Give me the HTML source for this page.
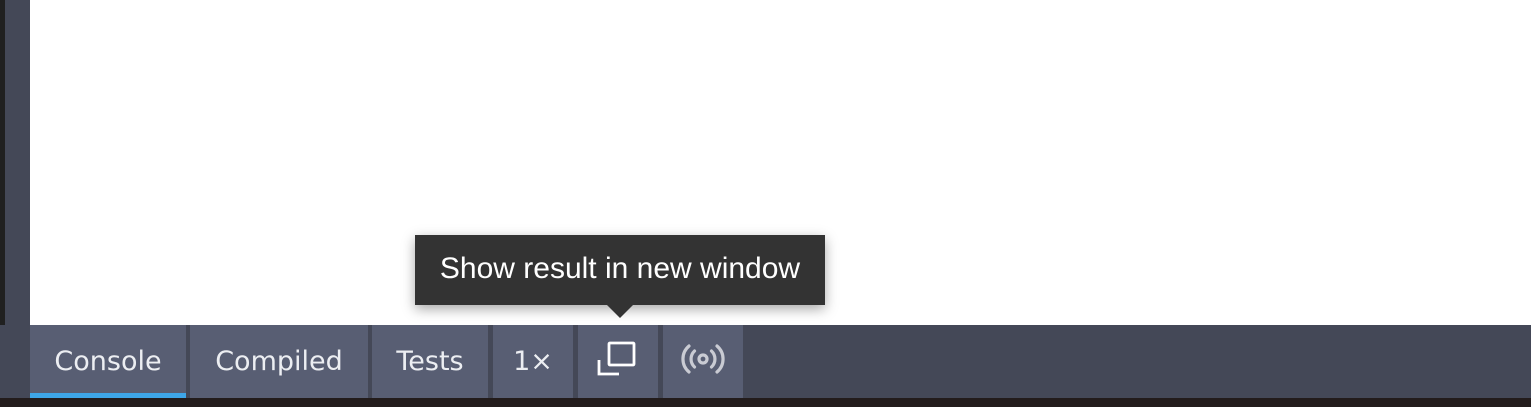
<!DOCTYPE html>
<html><head><style>
body{margin:0;width:1531px;height:407px;position:relative;overflow:hidden;background:#fff;font-family:"Liberation Sans",sans-serif}
.l{position:absolute;left:0;top:0;width:30px;height:398px;background:#444857}
.l2{position:absolute;left:0;top:0;width:5px;height:325px;background:#202020}
.bar{position:absolute;left:0;top:325px;width:1531px;height:73px;background:#444857}
.bot{position:absolute;left:0;top:398px;width:1531px;height:9px;background:#231c1c}
.b{position:absolute;top:325px;height:73px;background:#585e73;color:#eceef2;display:flex;align-items:center;justify-content:center;font-family:"DejaVu Sans","Liberation Sans",sans-serif;font-size:27px}
.tip{position:absolute;left:415px;top:235px;width:410px;height:70px;background:#333;color:#fff;font-size:30px;line-height:68px;text-align:center;box-shadow:0 4px 12px rgba(0,0,0,.35)}
.ar{position:absolute;left:607px;top:305px;border-left:13px solid transparent;border-right:13px solid transparent;border-top:13px solid #333}
</style></head><body>
<div class="l"></div><div class="l2"></div>
<div class="bar"></div>
<div class="b" style="left:30px;width:156px">Console</div>
<div style="position:absolute;left:30px;top:393px;width:156px;height:5px;background:#3ea6e8"></div>
<div class="b" style="left:190px;width:178px">Compiled</div>
<div class="b" style="left:372px;width:116px">Tests</div>
<div class="b" style="left:493px;width:80px">1×</div>
<div class="b" style="left:578px;width:80px"><svg width="44" height="44" viewBox="0 0 44 44" fill="none" stroke="#fff" stroke-width="2.8" style="margin-top:-8px"><path d="M3 24v14h20"/><rect x="13" y="7" width="25" height="22" rx="1"/></svg></div>
<div class="b" style="left:663px;width:80px"><svg width="46" height="34" viewBox="0 0 46 34" fill="none" stroke="#c9cbd3" stroke-width="3.2" stroke-linecap="round" style="margin-top:-6px"><circle cx="23" cy="17" r="4"/><path d="M14.5 9a11 11 0 0 0 0 16M31.5 9a11 11 0 0 1 0 16M9 4a17 17 0 0 0 0 26M37 4a17 17 0 0 1 0 26"/></svg></div>
<div class="bot"></div>
<div class="tip">Show result in new window</div>
<div class="ar"></div>
</body></html>
